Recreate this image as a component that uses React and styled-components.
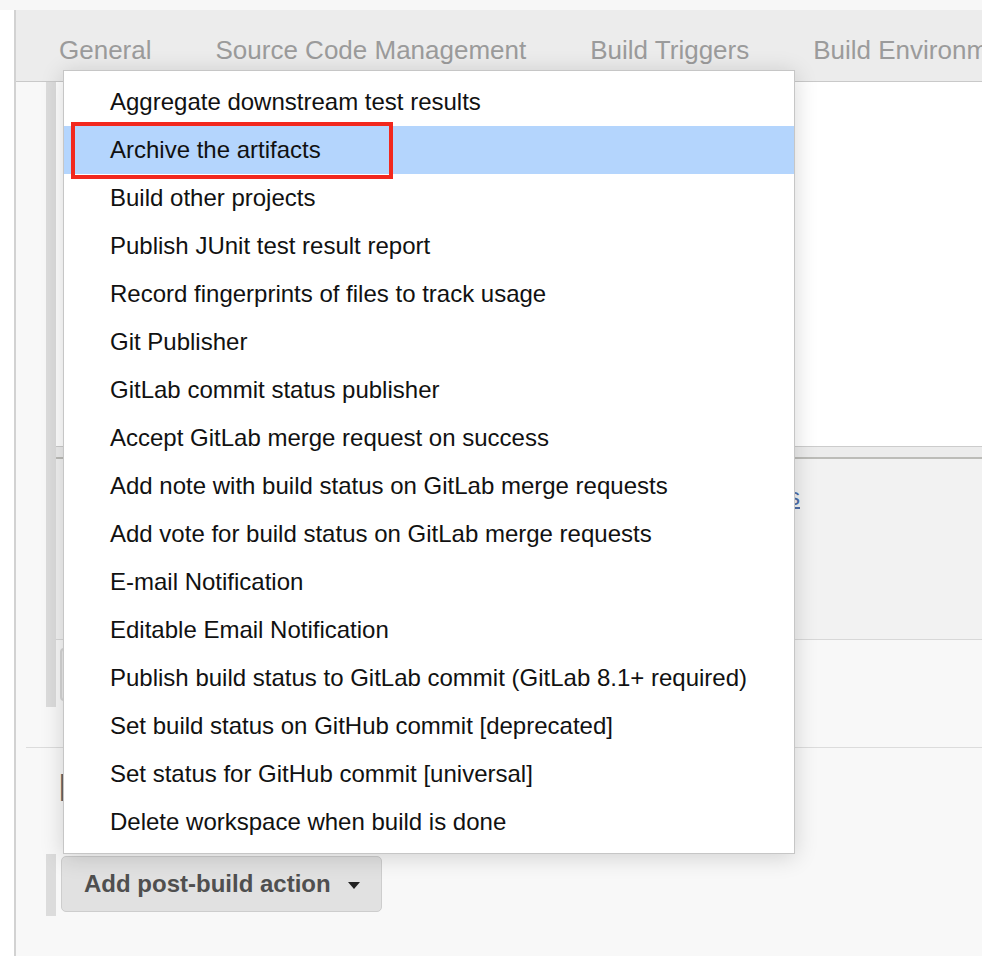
import React from 'react';
import styled, { createGlobalStyle } from 'styled-components';

const GlobalStyle = createGlobalStyle`
  html, body { margin: 0; padding: 0; }
  body {
    background: #fff;
    font-family: "Liberation Sans", Arial, Helvetica, sans-serif;
    overflow: hidden;
  }
  * { box-sizing: border-box; }
`;

const Page = styled.div`
  position: relative;
  width: 982px;
  height: 956px;
  overflow: hidden;
  background: #fff;
`;

const TopStrip = styled.div`
  height: 10px;
  background: #f7f7f7;
`;

const Shell = styled.div`
  display: flex;
  height: 946px;
`;

const Gutter = styled.div`
  width: 14px;
  flex: none;
  background: #fff;
`;

const Panel = styled.div`
  flex: 1;
  min-width: 0;
  display: flex;
  flex-direction: column;
  border-left: 2px solid #d2d2d2;
  background: #f8f8f8;
`;

const TabBar = styled.div`
  height: 72px;
  flex: none;
  display: flex;
  gap: 64px;
  padding-left: 43px;
  background: #ececec;
  border-bottom: 1px solid #c9c9c9;
  white-space: nowrap;
  overflow: hidden;
`;

const Tab = styled.div`
  padding-top: 25px;
  font-size: 26px;
  line-height: 30px;
  color: #9b9b9b;
`;

const Body = styled.div`
  flex: 1;
  display: flex;
  flex-direction: column;
`;

const Section = styled.div`
  margin-left: 30px;
  border-left: 10px solid #dcdcdc;
  display: flex;
  flex-direction: column;
`;

const Block = styled.div`
  height: ${p => p.$h}px;
  background: ${p => p.$bg};
  border-bottom: ${p => p.$line || 'none'};
  padding: ${p => p.$pad || '0'};
`;

const LinkCell = styled.div`
  width: 744px;
  text-align: right;
  font-size: 24px;
  line-height: 28px;
`;

const HelpLink = styled.a`
  color: #4d6ea8;
  text-decoration: underline;
`;

const GhostButton = styled.div`
  margin-left: 4px;
  width: 260px;
  height: 53px;
  border: 2px solid #d6d6d6;
  border-radius: 4px;
  background: #ececec;
`;

const Spacer = styled.div`
  height: 40px;
  flex: none;
`;

const PostBuild = styled.div`
  margin-left: 10px;
  border-top: 1px solid #dcdcdc;
  padding-top: 18px;
  display: flex;
  flex-direction: column;
`;

const Heading = styled.div`
  padding-left: 32px;
  font-size: 38px;
  line-height: 44px;
  color: #666;
  white-space: nowrap;
`;

const ButtonRow = styled.div`
  margin-top: 44px;
  margin-left: 20px;
  height: 62px;
  border-left: 10px solid #dcdcdc;
  padding: 2px 0 0 5px;
`;

const DropButton = styled.div`
  display: inline-flex;
  align-items: center;
  height: 56px;
  padding: 0 21px 0 22px;
  gap: 17px;
  background: #e1e1e1;
  border: 1.5px solid #cdcdcd;
  border-radius: 5px;
  font-size: 24px;
  font-weight: bold;
  color: #4f4f4f;
  white-space: nowrap;
`;

const Caret = styled.span`
  width: 0;
  height: 0;
  border-left: 6.5px solid transparent;
  border-right: 6.5px solid transparent;
  border-top: 7px solid #222;
  margin-top: 2px;
`;

const Menu = styled.div`
  position: absolute;
  left: 63px;
  top: 70px;
  width: 732px;
  padding: 7px 0;
  background: #fff;
  border: 1px solid #c6c6c6;
  box-shadow: 0 3px 22px rgba(0, 0, 0, 0.16);
  z-index: 10;
`;

const Item = styled.div`
  position: relative;
  height: 48px;
  padding-left: 46px;
  font-size: 24px;
  line-height: 48px;
  color: #111;
  white-space: nowrap;
  background: ${p => (p.$active ? '#b4d5fd' : 'transparent')};
`;

const Annotation = styled.div`
  position: absolute;
  left: 7px;
  top: -4px;
  width: 322px;
  height: 57px;
  border: 4px solid #f2281e;
`;

const tabs = ['General', 'Source Code Management', 'Build Triggers', 'Build Environment'];

const items = [
  'Aggregate downstream test results',
  'Archive the artifacts',
  'Build other projects',
  'Publish JUnit test result report',
  'Record fingerprints of files to track usage',
  'Git Publisher',
  'GitLab commit status publisher',
  'Accept GitLab merge request on success',
  'Add note with build status on GitLab merge requests',
  'Add vote for build status on GitLab merge requests',
  'E-mail Notification',
  'Editable Email Notification',
  'Publish build status to GitLab commit (GitLab 8.1+ required)',
  'Set build status on GitHub commit [deprecated]',
  'Set status for GitHub commit [universal]',
  'Delete workspace when build is done',
];

export default function App() {
  return (
    <Page>
      <GlobalStyle />
      <TopStrip />
      <Shell>
        <Gutter />
        <Panel>
          <TabBar>
            {tabs.map(t => (
              <Tab key={t}>{t}</Tab>
            ))}
          </TabBar>
          <Body>
            <Section>
              <Block $h={365} $bg="#fff" $line="1px solid #cccccc" />
              <Block $h={12} $bg="#ececec" $line="2px solid #bcbcb8" />
              <Block $h={181} $bg="#f2f2f2" $line="1px solid #d8d8d8" $pad="24px 0 0 0">
                <LinkCell>
                  <HelpLink>Environment variables</HelpLink>
                </LinkCell>
              </Block>
              <Block $h={67} $bg="#f8f8f8" $pad="8px 0 0 0">
                <GhostButton />
              </Block>
            </Section>
            <Spacer />
            <PostBuild>
              <Heading>Post-build Actions</Heading>
              <ButtonRow>
                <DropButton>
                  Add post-build action
                  <Caret />
                </DropButton>
              </ButtonRow>
            </PostBuild>
          </Body>
        </Panel>
      </Shell>
      <Menu>
        {items.map((label, i) => (
          <Item key={label} $active={i === 1}>
            {label}
            {i === 1 && <Annotation />}
          </Item>
        ))}
      </Menu>
    </Page>
  );
}
